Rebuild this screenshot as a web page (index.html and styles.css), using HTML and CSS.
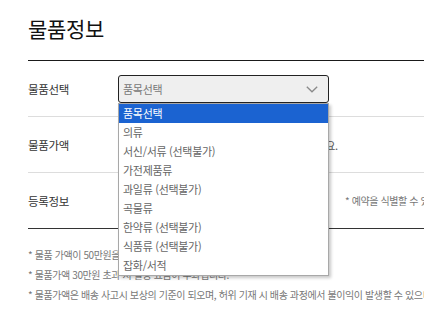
FILE: index.html
```html
<!DOCTYPE html>
<html lang="ko">
<head>
<meta charset="utf-8">
<title>물품정보</title>
<link rel="stylesheet" href="styles.css">
</head>
<body>
<div class="page">
  <h1 class="title">물품정보</h1>
  <div class="form">
    <div class="row">
      <div class="label">물품선택</div>
      <div class="field">
        <div class="select-wrap">
          <div class="select">
            <span class="select-text">품목선택</span>
            <svg class="chev" width="12" height="7" viewBox="0 0 12 7"><polyline points="0.8,0.8 6,5.8 11.2,0.8" fill="none" stroke="#8a8a8a" stroke-width="1.3"/></svg>
          </div>
          <ul class="dropdown">
            <li class="opt active">품목선택</li>
            <li class="opt">의류</li>
            <li class="opt">서신/서류 (선택불가)</li>
            <li class="opt">가전제품류</li>
            <li class="opt">과일류 (선택불가)</li>
            <li class="opt">곡물류</li>
            <li class="opt">한약류 (선택불가)</li>
            <li class="opt">식품류 (선택불가)</li>
            <li class="opt">잡화/서적</li>
          </ul>
        </div>
      </div>
    </div>
    <div class="row">
      <div class="label">물품가액</div>
      <div class="field">
        <div class="input price"></div>
        <span class="hint">원 (숫자만 입력해 주세요.</span>
      </div>
    </div>
    <div class="row last">
      <div class="label">등록정보</div>
      <div class="field">
        <div class="input info"></div>
        <span class="note">* 예약을 식별할 수 있는 정보를 입력해 주세요.</span>
      </div>
    </div>
  </div>
  <ul class="notes">
    <li>* 물품 가액이 50만원을 초과하는 경우 예약이 불가합니다.</li>
    <li>* 물품가액 30만원 초과 시 할증 요금이 부과됩니다.</li>
    <li>* 물품가액은 배송 사고시 보상의 기준이 되오며, 허위 기재 시 배송 과정에서 불이익이 발생할 수 있으니 정확히 입력해 주세요.</li>
  </ul>
</div>
</body>
</html>
```
FILE: styles.css
```css
html, body {
  margin: 0;
  padding: 0;
  overflow: hidden;
  background: #fff;
}
body {
  font-family: "Noto Sans CJK KR", "Noto Sans", sans-serif;
  color: #333;
}
.page {
  padding: 12px 0 0 28px;
  width: 700px;
}
.title {
  margin: 0;
  font-size: 21px;
  font-weight: 400;
  color: #111;
  line-height: 32px;
  height: 48px;
  letter-spacing: -0.3px;
}
.form {
  border-top: 1px solid #1a1a1a;
  border-bottom: 1px solid #333;
}
.row {
  display: flex;
  align-items: center;
  height: 55px;
  border-bottom: 1px solid #ddd;
}
.row.last {
  border-bottom: none;
}
.label {
  width: 90px;
  font-size: 11.5px;
  color: #333;
  letter-spacing: -0.3px;
}
.field {
  display: flex;
  align-items: center;
  gap: 10px;
}
.select-wrap {
  position: relative;
}
.select {
  box-sizing: border-box;
  width: 211px;
  height: 28px;
  border: 1px solid #222;
  border-radius: 3px;
  background: #efefef;
  display: flex;
  align-items: center;
  justify-content: space-between;
  padding: 0 10px 0 4px;
}
.select-text {
  font-size: 11px;
  color: #777;
  letter-spacing: -0.3px;
}
.chev {
  display: block;
  margin-top: 1px;
}
.dropdown {
  position: absolute;
  left: 0;
  top: 28px;
  z-index: 5;
  box-sizing: border-box;
  width: 211px;
  margin: 0;
  padding: 0;
  list-style: none;
  background: #fff;
  border: 1px solid #a8a8a8;
  box-shadow: 2px 2px 3px rgba(0, 0, 0, 0.22);
}
.opt {
  height: 19px;
  line-height: 19px;
  padding-left: 4px;
  font-size: 11px;
  color: #666;
  letter-spacing: -0.3px;
}
.opt.active {
  background: #1b63d1;
  color: #fff;
}
.input {
  box-sizing: border-box;
  height: 28px;
  border: 1px solid #ccc;
  border-radius: 3px;
}
.input.price {
  width: 97px;
}
.input.info {
  width: 200px;
  margin-right: 17px;
}
.hint {
  font-size: 11px;
  color: #555;
  letter-spacing: -0.3px;
}
.note {
  font-size: 10px;
  color: #777;
  letter-spacing: -0.4px;
}
.notes {
  list-style: none;
  margin: 16px 0 0;
  padding: 0;
}
.notes li {
  font-size: 10px;
  color: #777;
  line-height: 20px;
  letter-spacing: -0.4px;
  white-space: nowrap;
}
```
